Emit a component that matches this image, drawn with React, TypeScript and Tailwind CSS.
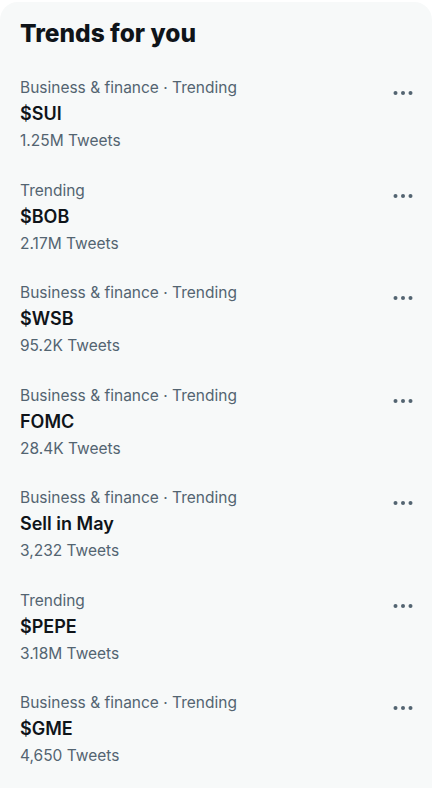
const trends = [
  { category: 'Business & finance · Trending', title: '$SUI', count: '1.25M Tweets' },
  { category: 'Trending', title: '$BOB', count: '2.17M Tweets' },
  { category: 'Business & finance · Trending', title: '$WSB', count: '95.2K Tweets' },
  { category: 'Business & finance · Trending', title: 'FOMC', count: '28.4K Tweets' },
  { category: 'Business & finance · Trending', title: 'Sell in May', count: '3,232 Tweets' },
  { category: 'Trending', title: '$PEPE', count: '3.18M Tweets' },
  { category: 'Business & finance · Trending', title: '$GME', count: '4,650 Tweets' },
]

function MoreIcon() {
  return (
    <svg width="24" height="10" viewBox="0 0 24 10" className="text-[#536471]">
      <circle cx="4.5" cy="5" r="2" fill="currentColor" />
      <circle cx="12" cy="5" r="2" fill="currentColor" />
      <circle cx="19.5" cy="5" r="2" fill="currentColor" />
    </svg>
  )
}

export default function App() {
  return (
    <div className="w-[434px] h-[788px] bg-white pt-[2px] overflow-hidden" style={{ fontFamily: 'Inter, "Noto Sans", sans-serif' }}>
      <div className="h-[786px] w-[432px] bg-[#f7f9f9] rounded-t-[18px]">
        {/* header */}
        <div className="h-[61px] px-[20px] pt-[16px]">
          <h2 className="text-[24.5px] leading-[30px] font-extrabold text-[#0f1419]">Trends for you</h2>
        </div>

        {trends.map((t, i) => (
          <div key={i} className="relative h-[102.5px] px-[20px] pt-[15px]">
            <div className="text-[15.5px] leading-[20px] text-[#536471]">{t.category}</div>
            <div className="mt-[3px] text-[18px] leading-[25px] font-semibold text-[#0f1419]">{t.title}</div>
            <div className="mt-[5px] text-[15.5px] leading-[20px] text-[#536471]">{t.count}</div>
            <div className="absolute right-[17px] top-[25px]">
              <MoreIcon />
            </div>
          </div>
        ))}
      </div>
    </div>
  )
}
